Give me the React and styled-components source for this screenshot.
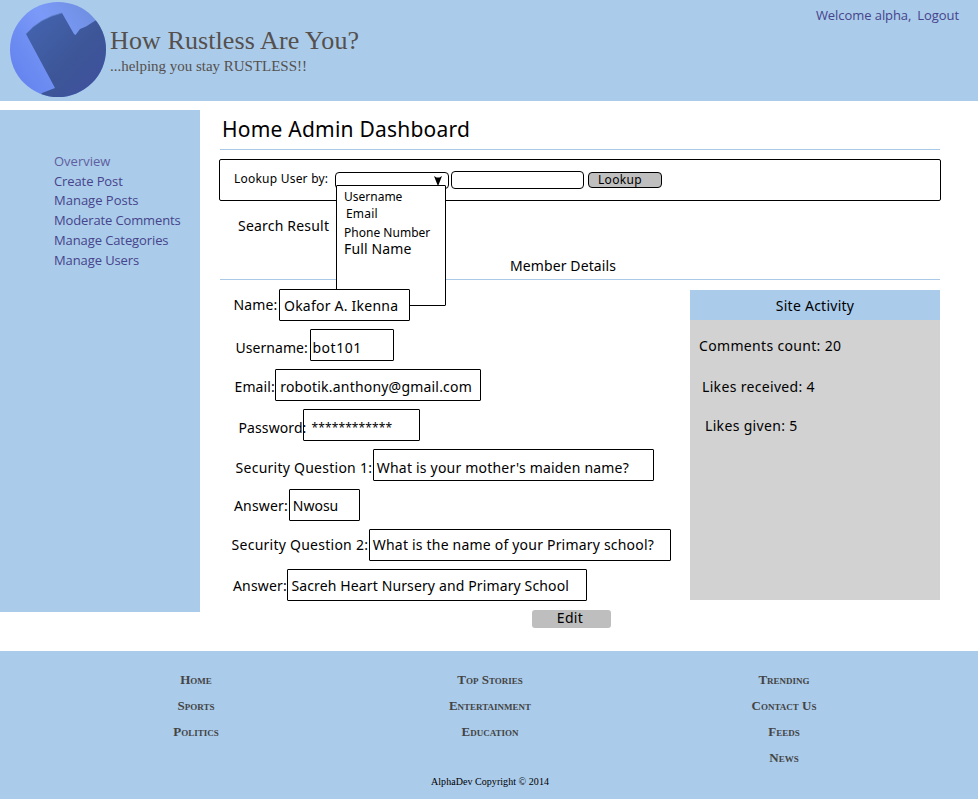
import React from 'react';
import styled, { createGlobalStyle } from 'styled-components';

const GlobalStyle = createGlobalStyle`
  * { box-sizing: border-box; }
  body {
    margin: 0;
    background: #fff;
    color: #000;
    font-family: 'Noto Sans', sans-serif;
    font-size: 14px;
    line-height: 20px;
  }
  a { color: inherit; text-decoration: none; }
  ul { list-style: none; margin: 0; padding: 0; }
`;

const sky = '#aacbea';
const serif = "'Liberation Serif', serif";

const Page = styled.div`
  width: 978px;
  height: 799px;
  display: flex;
  flex-direction: column;
  overflow: hidden;
`;

const Header = styled.header`
  flex: none;
  height: 101px;
  padding: 1px 19px 0 9px;
  display: flex;
  background: ${sky};
`;

const Brand = styled.div`
  padding: 25px 0 0 4px;
  font-family: ${serif};
  color: #55504d;
  white-space: nowrap;
`;

const SiteName = styled.div`
  font-size: 26px;
  line-height: 30px;
  letter-spacing: 0.1px;
`;

const Tagline = styled.div`
  font-size: 15px;
  line-height: 20px;
  letter-spacing: -0.02px;
`;

const AccountLinks = styled.nav`
  margin-left: auto;
  padding-top: 4px;
  display: flex;
  gap: 6px;
  font-family: 'Open Sans', sans-serif;
  font-size: 13px;
  color: #46448a;
  letter-spacing: -0.07px;
`;

const Main = styled.div`
  flex: none;
  display: flex;
  height: 550px;
  padding-top: 9px;
`;

const Sidebar = styled.nav`
  flex: none;
  width: 200px;
  height: 502px;
  padding: 41px 0 0 54px;
  background: ${sky};
  font-family: 'Open Sans', sans-serif;
  font-size: 13px;
  color: #46448a;
`;

const SideItem = styled.li`
  height: ${(p) => p.$h || 20}px;
  letter-spacing: ${(p) => p.$ls || 0}px;
  color: ${(p) => (p.$muted ? '#5f5e9e' : 'inherit')};
  white-space: nowrap;
`;

const Content = styled.main`
  width: 722px;
  margin-left: 19px;
  display: flex;
  flex-direction: column;
`;

const Title = styled.h1`
  margin: 0 1px;
  height: 40px;
  padding: 5px 0 0 2px;
  border-bottom: 1px solid #a9c9e6;
  font-size: 21px;
  line-height: 28px;
  font-weight: 400;
  letter-spacing: 0.22px;
`;

const LookupBar = styled.form`
  margin-top: 9px;
  height: 42px;
  padding: 11px 0 0 14px;
  border: 1px solid #000;
  border-radius: 2px;
  display: flex;
  align-items: flex-start;
  font-size: 12px;
`;

const LookupLabel = styled.label`
  width: 101px;
  margin-top: -2px;
  letter-spacing: 0.22px;
  white-space: nowrap;
`;

const Select = styled.div`
  position: relative;
  width: 114px;
  height: 17px;
  margin-top: 1px;
  border: 1px solid #000;
  border-radius: 4px;
  display: flex;
  justify-content: flex-end;
  padding: 3px 6px 0 0;
`;

const Menu = styled.ul`
  position: absolute;
  z-index: 1;
  left: 0;
  top: 12px;
  width: 110px;
  height: 121px;
  padding-top: 3px;
  border: 1px solid #000;
  border-radius: 1px;
  background: #fff;
`;

const MenuItem = styled.li`
  height: ${(p) => p.$h}px;
  line-height: 16px;
  padding-left: ${(p) => p.$indent}px;
  font-size: ${(p) => (p.$large ? 14 : 12)}px;
  letter-spacing: ${(p) => p.$ls}px;
  white-space: nowrap;
`;

const LookupInput = styled.div`
  width: 133px;
  height: 18px;
  margin-left: 2px;
  border: 1px solid #000;
  border-radius: 4px;
`;

const LookupButton = styled.button`
  width: 74px;
  height: 16px;
  margin: 1px 0 0 4px;
  padding: 0 0 0 9px;
  border: 1px solid #000;
  border-radius: 4px;
  background: #bfbfbf;
  color: #000;
  font: 12px/14px 'Noto Sans', sans-serif;
  letter-spacing: 0.3px;
  text-align: left;
`;

const ResultHeader = styled.div`
  margin: 0 1px;
  height: 79px;
  border-bottom: 1px solid #a9c9e6;
  display: flex;
`;

const ResultLabel = styled.div`
  width: 290px;
  padding: 15px 0 0 18px;
  letter-spacing: 0.2px;
`;

const DetailsHeading = styled.div`
  padding-top: 55px;
  letter-spacing: 0.1px;
`;

const Details = styled.div`
  display: flex;
  margin: 9px 1px 0;
`;

const Fields = styled.div`
  width: 470px;
  display: flex;
  flex-direction: column;
  gap: 8px;
`;

const Field = styled.div`
  height: 32px;
  display: flex;
`;

const FieldLabel = styled.div`
  flex: none;
  position: relative;
  z-index: 3;
  width: ${(p) => p.$w}px;
  padding: ${(p) => p.$top}px 0 0 ${(p) => p.$indent}px;
  letter-spacing: ${(p) => p.$ls}px;
  white-space: nowrap;
`;

const FieldValue = styled.div`
  position: relative;
  z-index: 2;
  width: ${(p) => p.$w}px;
  padding: ${(p) => p.$top - 1}px 0 0 ${(p) => p.$indent}px;
  border: 1px solid #000;
  border-radius: 1px;
  background: #fff;
  font-size: ${(p) => p.$size || 14}px;
  letter-spacing: ${(p) => p.$ls}px;
  white-space: nowrap;
`;

const EditButton = styled.button`
  width: 79px;
  height: 18px;
  margin: 1px 0 0 312px;
  padding: 0 3px 2px 0;
  border: 0;
  border-radius: 3px;
  background: #bebebe;
  color: #000;
  font: 14px/16px 'Noto Sans', sans-serif;
  letter-spacing: 0.3px;
`;

const Activity = styled.aside`
  width: 250px;
  height: 310px;
  margin-top: 1px;
  background: #d2d2d2;
  letter-spacing: 0.33px;
`;

const ActivityTitle = styled.div`
  height: 30px;
  padding-top: 6px;
  background: ${sky};
  text-align: center;
  letter-spacing: 0.25px;
`;

const Stat = styled.div`
  height: ${(p) => p.$h}px;
  padding-left: ${(p) => p.$indent}px;
`;

const Stats = styled.div`
  padding-top: 16px;
`;

const Footer = styled.footer`
  flex: none;
  height: 148px;
  padding: 16px 47px 0 49px;
  background: ${sky};
  font-family: ${serif};
`;

const FooterColumns = styled.div`
  display: grid;
  grid-template-columns: repeat(3, 294px);
  height: 105px;
`;

const FooterLink = styled.li`
  height: 26px;
  line-height: 26px;
  font-size: 13px;
  font-weight: 700;
  font-variant: small-caps;
  color: #444;
  text-align: center;
`;

const Copyright = styled.div`
  font-size: 10px;
  text-align: center;
  letter-spacing: 0.05px;
`;

const Logo = () => (
  <svg width="97" height="98" viewBox="9 1 97 98">
    <defs>
      <linearGradient id="disc" x1="0" y1="0.6" x2="0.9" y2="0">
        <stop offset="0" stopColor="#6685ef" />
        <stop offset="0.5" stopColor="#7b9af8" />
        <stop offset="1" stopColor="#6c8cdc" />
      </linearGradient>
      <linearGradient id="shade" x1="0.1" y1="0" x2="0.9" y2="0.8">
        <stop offset="0" stopColor="#4464b0" />
        <stop offset="0.6" stopColor="#3d5698" />
        <stop offset="1" stopColor="#3e519c" />
      </linearGradient>
      <clipPath id="round">
        <ellipse cx="58" cy="49.5" rx="48" ry="47.5" />
      </clipPath>
    </defs>
    <g clipPath="url(#round)">
      <rect x="9" y="1" width="98" height="98" fill="url(#disc)" />
      <path
        d="M26 34 Q40 18 62 13 L74 34 L75.5 35 L80 29 L86 26.5 L97 19.5 L110 20 V100 H36 L42 93 L55 88 Z"
        fill="url(#shade)"
      />
      <path d="M26 34 Q40 18 62 13" fill="none" stroke="#5f7cc6" strokeWidth="0.8" />
    </g>
  </svg>
);

const Arrow = () => (
  <svg width="8" height="9" viewBox="0 0 8 9">
    <path d="M0 0 L2.5 1.6 H5.5 L8 0 L4.5 9 H3.5 Z" />
  </svg>
);

const sideItems = [
  { text: 'Overview', ls: 0, muted: true },
  { text: 'Create Post', ls: -0.1, h: 19 },
  { text: 'Manage Posts', ls: 0 },
  { text: 'Moderate Comments', ls: -0.13 },
  { text: 'Manage Categories', ls: -0.1 },
  { text: 'Manage Users', ls: -0.1 },
];

const menuItems = [
  { text: 'Username', h: 17, indent: 7, ls: 0 },
  { text: 'Email', h: 19, indent: 9, ls: 0.2 },
  { text: 'Phone Number', h: 16, indent: 7, ls: 0.02 },
  { text: 'Full Name', h: 20, indent: 7, ls: 0.15, large: true },
];

const fields = [
  { label: 'Name:', lw: 59, li: 13.5, lt: 6, ls: 0.1, value: 'Okafor A. Ikenna', w: 131, vi: 4, vt: 7, vs: 0.23 },
  { label: 'Username:', lw: 90, li: 15.5, lt: 9, ls: 0.05, value: 'bot101', w: 84, vi: 1.5, vt: 9, vs: 0.5 },
  { label: 'Email:', lw: 55, li: 14.5, lt: 8, ls: 0.1, value: 'robotik.anthony@gmail.com', w: 206, vi: 4.2, vt: 8, vs: 0.2 },
  { label: 'Password:', lw: 83, li: 18.5, lt: 9, ls: 0.1, value: '************', w: 117, vi: 7.6, vt: 9, vs: 0.1, size: 12 },
  { label: 'Security Question 1:', lw: 153, li: 15.6, lt: 9, ls: 0.25, value: "What is your mother's maiden name?", w: 281, vi: 2.8, vt: 9, vs: 0.2 },
  { label: 'Answer:', lw: 69, li: 14, lt: 7, ls: 0.15, value: 'Nwosu', w: 71, vi: 2.8, vt: 7, vs: 0 },
  { label: 'Security Question 2:', lw: 149, li: 11.6, lt: 6, ls: 0.25, value: 'What is the name of your Primary school?', w: 302, vi: 2.8, vt: 6, vs: 0.2 },
  { label: 'Answer:', lw: 67, li: 13, lt: 7, ls: 0.15, value: 'Sacreh Heart Nursery and Primary School', w: 300, vi: 3.4, vt: 7, vs: 0.13 },
];

const stats = [
  { text: 'Comments count: 20', h: 41, indent: 9 },
  { text: 'Likes received: 4', h: 39, indent: 12 },
  { text: 'Likes given: 5', h: 20, indent: 15 },
];

const footerColumns = [
  ['Home', 'Sports', 'Politics'],
  ['Top Stories', 'Entertainment', 'Education'],
  ['Trending', 'Contact Us', 'Feeds', 'News'],
];

export default function App() {
  return (
    <Page>
      <GlobalStyle />
      <Header>
        <Logo />
        <Brand>
          <SiteName>How Rustless Are You?</SiteName>
          <Tagline>...helping you stay RUSTLESS!!</Tagline>
        </Brand>
        <AccountLinks>
          <span>Welcome alpha,</span>
          <a href="#logout">Logout</a>
        </AccountLinks>
      </Header>
      <Main>
        <Sidebar>
          <ul>
            {sideItems.map((s) => (
              <SideItem key={s.text} $ls={s.ls} $h={s.h} $muted={s.muted}>
                {s.text}
              </SideItem>
            ))}
          </ul>
        </Sidebar>
        <Content>
          <Title>Home Admin Dashboard</Title>
          <LookupBar>
            <LookupLabel>Lookup User by:</LookupLabel>
            <Select>
              <Arrow />
              <Menu>
                {menuItems.map((m) => (
                  <MenuItem key={m.text} $h={m.h} $indent={m.indent} $ls={m.ls} $large={m.large}>
                    {m.text}
                  </MenuItem>
                ))}
              </Menu>
            </Select>
            <LookupInput />
            <LookupButton type="button">Lookup</LookupButton>
          </LookupBar>
          <ResultHeader>
            <ResultLabel>Search Result</ResultLabel>
            <DetailsHeading>Member Details</DetailsHeading>
          </ResultHeader>
          <Details>
            <Fields>
              {fields.map((f) => (
                <Field key={f.value}>
                  <FieldLabel $w={f.lw} $indent={f.li} $top={f.lt} $ls={f.ls}>
                    {f.label}
                  </FieldLabel>
                  <FieldValue $w={f.w} $indent={f.vi} $top={f.vt} $ls={f.vs} $size={f.size}>
                    {f.value}
                  </FieldValue>
                </Field>
              ))}
              <EditButton type="button">Edit</EditButton>
            </Fields>
            <Activity>
              <ActivityTitle>Site Activity</ActivityTitle>
              <Stats>
                {stats.map((s) => (
                  <Stat key={s.text} $h={s.h} $indent={s.indent}>
                    {s.text}
                  </Stat>
                ))}
              </Stats>
            </Activity>
          </Details>
        </Content>
      </Main>
      <Footer>
        <FooterColumns>
          {footerColumns.map((col) => (
            <ul key={col[0]}>
              {col.map((t) => (
                <FooterLink key={t}>
                  <a href="#top">{t}</a>
                </FooterLink>
              ))}
            </ul>
          ))}
        </FooterColumns>
        <Copyright>AlphaDev Copyright © 2014</Copyright>
      </Footer>
    </Page>
  );
}
